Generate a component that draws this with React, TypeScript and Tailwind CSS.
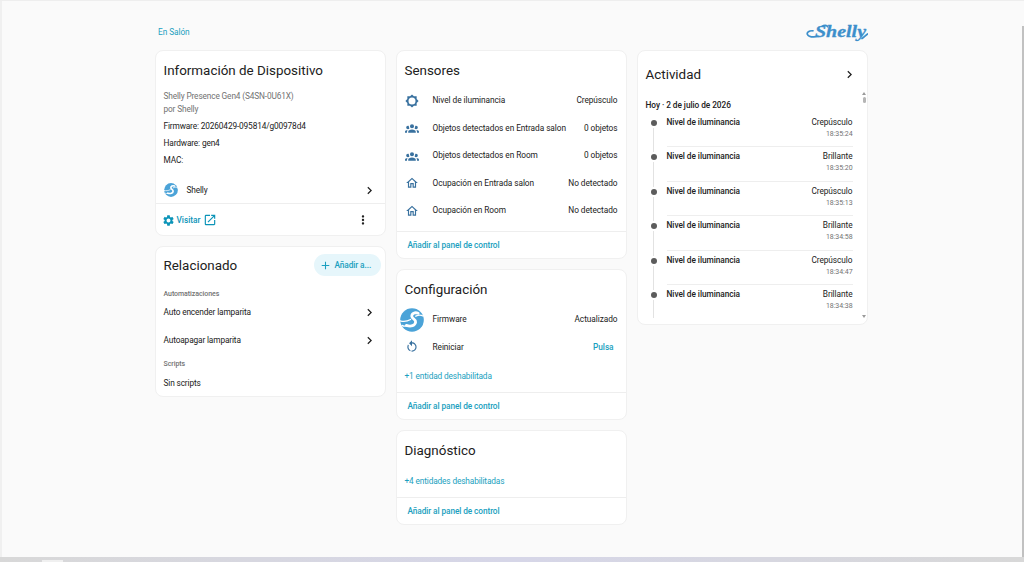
import type { ReactNode } from "react";
import {
  MdAdd,
  MdChevronRight,
  MdMoreVert,
  MdOpenInNew,
  MdOutlineHome,
  MdSettings,
} from "react-icons/md";

const activity = [
  { state: "Crepúsculo", time: "18:35:24" },
  { state: "Brillante", time: "18:35:20" },
  { state: "Crepúsculo", time: "18:35:13" },
  { state: "Brillante", time: "18:34:58" },
  { state: "Crepúsculo", time: "18:34:47" },
  { state: "Brillante", time: "18:34:38" },
];

function BrightnessIcon() {
  return (
    <svg viewBox="0 0 24 24" className="size-[14px]" fill="currentColor">
      <path d="M12,18A6,6 0 0,1 6,12A6,6 0 0,1 12,6A6,6 0 0,1 18,12A6,6 0 0,1 12,18M20,15.31L23.31,12L20,8.69V4H15.31L12,0.69L8.69,4H4V8.69L0.69,12L4,15.31V20H8.69L12,23.31L15.31,20H20V15.31Z" />
    </svg>
  );
}

function GroupIcon() {
  return (
    <svg viewBox="0 0 24 24" className="size-[14px]" fill="currentColor">
      <path d="M12,5.5A3.5,3.5 0 0,1 15.5,9A3.5,3.5 0 0,1 12,12.5A3.5,3.5 0 0,1 8.5,9A3.5,3.5 0 0,1 12,5.5M5,8C5.56,8 6.08,8.15 6.53,8.42C6.38,9.85 6.8,11.27 7.66,12.38C7.16,13.34 6.16,14 5,14A3,3 0 0,1 2,11A3,3 0 0,1 5,8M19,8A3,3 0 0,1 22,11A3,3 0 0,1 19,14C17.84,14 16.84,13.34 16.34,12.38C17.2,11.27 17.62,9.85 17.47,8.42C17.92,8.15 18.44,8 19,8M5.5,18.25C5.5,16.18 8.41,14.5 12,14.5C15.59,14.5 18.5,16.18 18.5,18.25V20H5.5V18.25M0,20V18.5C0,17.11 1.89,15.94 4.45,15.6C3.86,16.28 3.5,17.22 3.5,18.25V20H0M24,20H20.5V18.25C20.5,17.22 20.14,16.28 19.55,15.6C22.11,15.94 24,17.11 24,18.5V20Z" />
    </svg>
  );
}

function RestartIcon() {
  return (
    <svg viewBox="0 0 24 24" className="size-[14px]" fill="currentColor">
      <path d="M12,4C14.1,4 16.1,4.8 17.6,6.3C20.7,9.4 20.7,14.5 17.6,17.6C15.8,19.5 13.3,20.2 10.9,19.9L11.4,17.9C13.1,18.1 14.9,17.5 16.2,16.2C18.5,13.9 18.5,10.1 16.2,7.7C15.1,6.6 13.5,6 12,6V10.6L7,5.6L12,0.6V4M6.3,17.6C3.7,15 3.3,11 5.1,7.9L6.6,9.4C5.5,11.6 5.9,14.4 7.8,16.2C8.3,16.7 8.9,17.1 9.6,17.4L9,19.4C8,19 7.1,18.4 6.3,17.6Z" />
    </svg>
  );
}

function ShellyMark({ className }: { className: string }) {
  return (
    <svg viewBox="0 0 24 24" className={className} fill="none">
      <circle cx="12" cy="12" r="11.8" fill="#4ba3d8" />
      <path
        d="M18.2 5.2C14.8 4 11.6 5.3 11.8 8.3C12 11 16 10.9 15.6 14.2C15.2 17.6 11 19 6.4 17.4"
        stroke="#fff"
        strokeWidth="2.8"
        strokeLinecap="round"
      />
      <path
        d="M0 12.8C3.4 13.8 7.5 13.3 10.6 11.5M2 17.4C3.6 18.4 5.2 18.3 7 17.8M15.8 8.2C18.5 6.8 21 6.9 23 8"
        stroke="#fff"
        strokeWidth="1.3"
        strokeLinecap="round"
      />
    </svg>
  );
}

function ShellyLogo() {
  return (
    <svg viewBox="0 0 64 24" className="h-6 w-16">
      <text
        x="11"
        y="17.3"
        textLength="51"
        lengthAdjust="spacingAndGlyphs"
        fill="#3d8fcb"
        stroke="#3d8fcb"
        strokeWidth="0.3"
        className="font-['Liberation_Serif',serif] text-[17px] font-bold tracking-normal italic"
      >
        Shelly
      </text>
      <path
        d="M9 10.8C5 10.5 2.6 12.4 3.4 14.3C4.4 16.8 10 17.2 15 16.4M18 6.4C20 4.9 23 5 23.6 6.7M58 18.6C60 17.5 62 15 63.6 14"
        fill="none"
        stroke="#3d8fcb"
        strokeWidth="1.7"
        strokeLinecap="round"
      />
    </svg>
  );
}

function Card({ className, children }: { className: string; children: ReactNode }) {
  return (
    <section
      className={`flex w-[231px] flex-col overflow-hidden rounded-lg border border-[#f0f0f0] bg-white ${className}`}
    >
      {children}
    </section>
  );
}

function Title({ children }: { children: ReactNode }) {
  return <h1 className="text-[13.4px] leading-[17px] tracking-normal">{children}</h1>;
}

function Row({ icon, name, children }: { icon: ReactNode; name: string; children: ReactNode }) {
  return (
    <div className="flex h-[27.5px] shrink-0 items-center pr-2">
      <div className="flex w-[30px] shrink-0 justify-center text-[#39719f]">{icon}</div>
      <div className="ml-[6px] flex-1">{name}</div>
      <div>{children}</div>
    </div>
  );
}

function AddToPanel() {
  return (
    <div className="mt-auto flex h-[27px] shrink-0 items-center border-t border-[#eeeeee] pt-px pl-[11px] font-medium tracking-[-0.1px] text-[#1a9fc0]">
      Añadir al panel de control
    </div>
  );
}

export default function App() {
  return (
    <div className="flex h-[562px] w-[1024px] flex-col overflow-hidden border-t border-[#eeeeee] bg-[#fafafa] font-[Roboto,sans-serif] text-[8.3px] leading-[13px] tracking-[-0.06px] text-[#212121]">
      <div className="flex h-[556px] shrink-0 justify-between">
        <div className="w-[2px] bg-[#f0f0f0]" />
        <main className="mr-[2px] w-[713px]">
          <header className="flex h-[49px] items-center justify-between pt-[13px] pl-[3.5px] text-[#1a9fc0]">
            <span className="pt-px">En Salón</span>
            <ShellyLogo />
          </header>
          <div className="flex items-start gap-[10px]">
            <div className="flex flex-col gap-[10px] tracking-[-0.14px]">
              <Card className="h-[186px]">
                <div className="shrink-0 px-2 pt-[11px]">
                  <Title>Información de Dispositivo</Title>
                  <div className="mt-[11px] text-[#727272]">Shelly Presence Gen4 (S4SN-0U61X)</div>
                  <div className="text-[#727272]">por Shelly</div>
                  <div className="mt-[4px]">Firmware: 20260429-095814/g00978d4</div>
                  <div className="mt-[4px]">Hardware: gen4</div>
                  <div className="mt-[4px]">MAC:</div>
                </div>
                <div className="mt-[7px] -mb-[6px] flex h-8 shrink-0 items-center pr-2 pl-2">
                  <ShellyMark className="size-[14px]" />
                  <span className="ml-[9px] flex-1">Shelly</span>
                  <MdChevronRight className="size-[15px]" />
                </div>
                <div className="mt-auto flex h-[32px] shrink-0 items-center border-t border-[#eeeeee] pt-px pr-[15px] pl-[6px] text-[#0b94b8]">
                  <MdSettings className="size-[13px]" />
                  <span className="ml-[2px] font-medium tracking-normal">Visitar</span>
                  <MdOpenInNew className="ml-[2px] size-[14px]" />
                  <MdMoreVert className="ml-auto size-[14px] text-[#212121]" />
                </div>
              </Card>
              <Card className="h-[151px]">
                <div className="flex items-center justify-between pt-[7px] pr-[4px] pl-2">
                  <Title>Relacionado</Title>
                  <button className="flex h-[22px] w-[67px] items-center rounded-full bg-[#e6f6fb] pl-[5px] font-medium text-[#1a9fc0]">
                    <MdAdd className="size-[13px]" />
                    <span className="ml-[3px] tracking-[-0.1px]">Añadir a...</span>
                  </button>
                </div>
                <div className="mt-[12px] px-2 text-[7px] font-medium tracking-[-0.05px] text-[#727272]">
                  Automatizaciones
                </div>
                <div className="mt-[-2px] flex h-[27.5px] items-center justify-between px-2">
                  Auto encender lamparita
                  <MdChevronRight className="size-[15px]" />
                </div>
                <div className="flex h-[27.5px] items-center justify-between px-2">
                  Autoapagar lamparita
                  <MdChevronRight className="size-[15px]" />
                </div>
                <div className="mt-[4px] px-2 text-[7px] font-medium tracking-[-0.05px] text-[#727272]">
                  Scripts
                </div>
                <div className="mt-[6px] px-2">Sin scripts</div>
              </Card>
            </div>

            <div className="flex flex-col gap-[10px]">
              <Card className="h-[209px]">
                <div className="px-2 pt-[11px] pb-[8px]">
                  <Title>Sensores</Title>
                </div>
                <Row icon={<BrightnessIcon />} name="Nivel de iluminancia">Crepúsculo</Row>
                <Row icon={<GroupIcon />} name="Objetos detectados en Entrada salon">0 objetos</Row>
                <Row icon={<GroupIcon />} name="Objetos detectados en Room">0 objetos</Row>
                <Row icon={<MdOutlineHome className="size-[14px]" />} name="Ocupación en Entrada salon">No detectado</Row>
                <Row icon={<MdOutlineHome className="size-[14px]" />} name="Ocupación en Room">No detectado</Row>
                <AddToPanel />
              </Card>
              <Card className="h-[151px]">
                <div className="px-2 pt-[11px] pb-[8px]">
                  <Title>Configuración</Title>
                </div>
                <Row icon={<ShellyMark className="size-[24px]" />} name="Firmware">Actualizado</Row>
                <Row icon={<RestartIcon />} name="Reiniciar">
                  <span className="pr-[4px] font-medium text-[#1a9fc0]">Pulsa</span>
                </Row>
                <div className="mt-[9px] px-2 tracking-[-0.14px] text-[#1a9fc0]">+1 entidad deshabilitada</div>
                <AddToPanel />
              </Card>
              <Card className="h-[95px]">
                <div className="px-2 pt-[11px]">
                  <Title>Diagnóstico</Title>
                </div>
                <div className="mt-[16px] px-2 tracking-[-0.14px] text-[#1a9fc0]">+4 entidades deshabilitadas</div>
                <AddToPanel />
              </Card>
            </div>

            <Card className="h-[275px]">
              <div className="flex h-[41px] shrink-0 items-center justify-between pt-[5px] pr-[10px] pl-2">
                <Title>Actividad</Title>
                <MdChevronRight className="size-[15px]" />
              </div>
              <div className="flex h-[226px]">
                <div className="w-[215px] overflow-hidden pl-2">
                  <div className="pt-[6.5px] pb-[1.5px] font-medium">Hoy · 2 de julio de 2026</div>
                  {activity.map((item) => (
                    <div key={item.time} className="flex h-[34.4px]">
                      <div className="flex w-[16px] shrink-0 flex-col items-center">
                        <div className="mt-[7px] size-[6px] shrink-0 rounded-full bg-[#5c5c5c]" />
                        <div className="mt-[2px] -mb-[5px] w-[1.5px] flex-1 bg-[#e2e2e2]" />
                      </div>
                      <div className="ml-[5px] flex flex-1 justify-between border-b border-[#eeeeee] pt-[3px]">
                        <span className="font-medium">Nivel de iluminancia</span>
                        <div className="text-right">
                          <div>{item.state}</div>
                          <div className="text-[7px] leading-[11px] text-[#727272]">{item.time}</div>
                        </div>
                      </div>
                    </div>
                  ))}
                </div>
                <div className="ml-auto flex w-[5px] flex-col items-center">
                  <svg viewBox="0 0 4 3" className="h-[3px] w-[4px]" fill="#9a9a9a">
                    <path d="M0 3L2 0L4 3Z" />
                  </svg>
                  <div className="mt-[2px] h-[6px] w-[3px] rounded-full bg-[#b5b5b5]" />
                  <svg viewBox="0 0 4 3" className="mt-auto h-[3px] w-[4px]" fill="#9a9a9a">
                    <path d="M0 0L2 3L4 0Z" />
                  </svg>
                </div>
              </div>
            </Card>
          </div>
        </main>
        <div className="mt-[25px] w-[2px] bg-[#c1c1c1]" />
      </div>
      <footer className="flex h-[6px] bg-linear-to-r from-[#d8d8d8] via-[#d6d6e8] to-[#d8d8d8]">
        <div className="mt-[3px] ml-[42px] h-[3px] w-[21px] bg-[#f0f0f0]" />
      </footer>
    </div>
  );
}
